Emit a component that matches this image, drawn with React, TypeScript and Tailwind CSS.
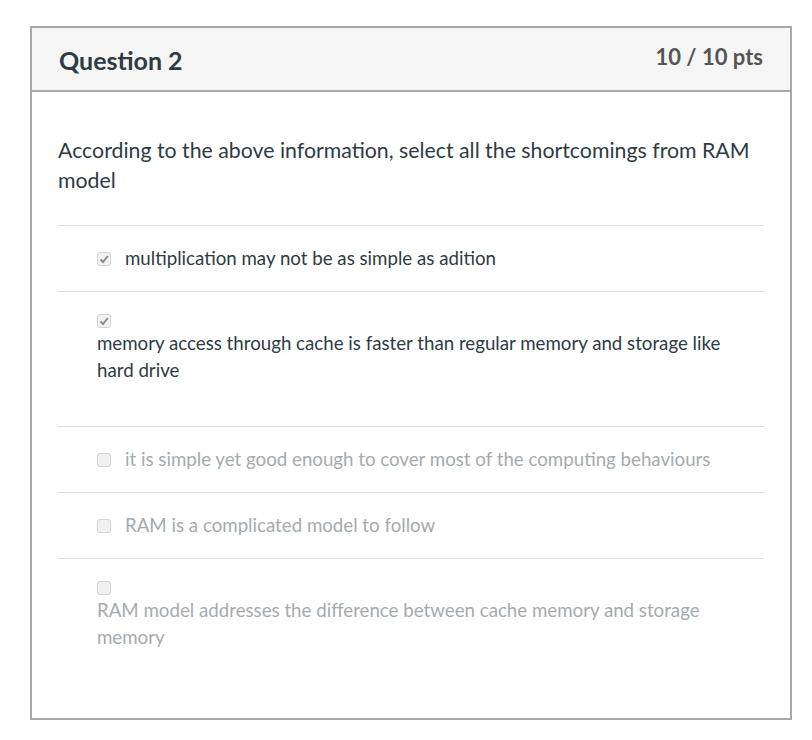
import React from 'react';

type Answer = {
  text: string;
  checked: boolean;
  block?: boolean;
};

const answers: Answer[] = [
  { text: 'multiplication may not be as simple as adition', checked: true },
  {
    text: 'memory access through cache is faster than regular memory and storage like hard drive',
    checked: true,
    block: true,
  },
  { text: 'it is simple yet good enough to cover most of the computing behaviours', checked: false },
  { text: 'RAM is a complicated model to follow', checked: false },
  {
    text: 'RAM model addresses the difference between cache memory and storage memory',
    checked: false,
    block: true,
  },
];

const Box = ({ checked }: { checked: boolean }) => (
  <span className="inline-flex w-[14px] h-[14px] shrink-0 items-center justify-center rounded-[3px] border border-[#d4d4d4] bg-[#f1f1f1]">
    {checked && (
      <svg width="10" height="10" viewBox="0 0 10 10">
        <path d="M1.5 5.5 L4 8 L8.8 2" fill="none" stroke="#8a8a8a" strokeWidth="2" />
      </svg>
    )}
  </span>
);

const App = () => {
  return (
    <div className="bg-white min-h-[740px] pt-[26px] px-[30px] font-['Lato','Liberation_Sans',sans-serif]">
      <div className="w-[762px] border-2 border-[#a8a8a8] bg-white">
        <div className="flex items-center justify-between h-[64px] px-[27px] bg-[#f5f5f5] border-b-2 border-[#a8a8a8]">
          <h2 className="text-[25px] font-bold text-[#2d3b45] pt-[4px]">Question 2</h2>
          <span className="text-[22px] font-bold text-[#555555] pb-[6px]">10 / 10 pts</span>
        </div>
        <div className="px-[26px] pt-[43px] pb-[25px]">
          <p className="text-[21.3px] leading-[30px] text-[#2d3b45] pb-[30px] border-b border-[#dcdcdc]">
            According to the above information, select all the shortcomings from RAM model
          </p>
          {answers.map((a, i) => (
            <div
              key={i}
              className={
                'pl-[39px] pr-4 py-[19px] text-[18.7px] leading-[27px] ' +
                (i < answers.length - 1 ? 'border-b border-[#dcdcdc] ' : '') +
                (a.checked ? 'text-[#2d3b45]' : 'text-[#a3abb0]')
              }
            >
              {a.block ? (
                <div className="pb-[23px]">
                  <div className="flex items-center h-[19px]">
                    <Box checked={a.checked} />
                  </div>
                  <div>{a.text}</div>
                </div>
              ) : (
                <div className="flex items-center gap-[14px]">
                  <Box checked={a.checked} />
                  <span>{a.text}</span>
                </div>
              )}
            </div>
          ))}
        </div>
      </div>
    </div>
  );
};

export default App;
